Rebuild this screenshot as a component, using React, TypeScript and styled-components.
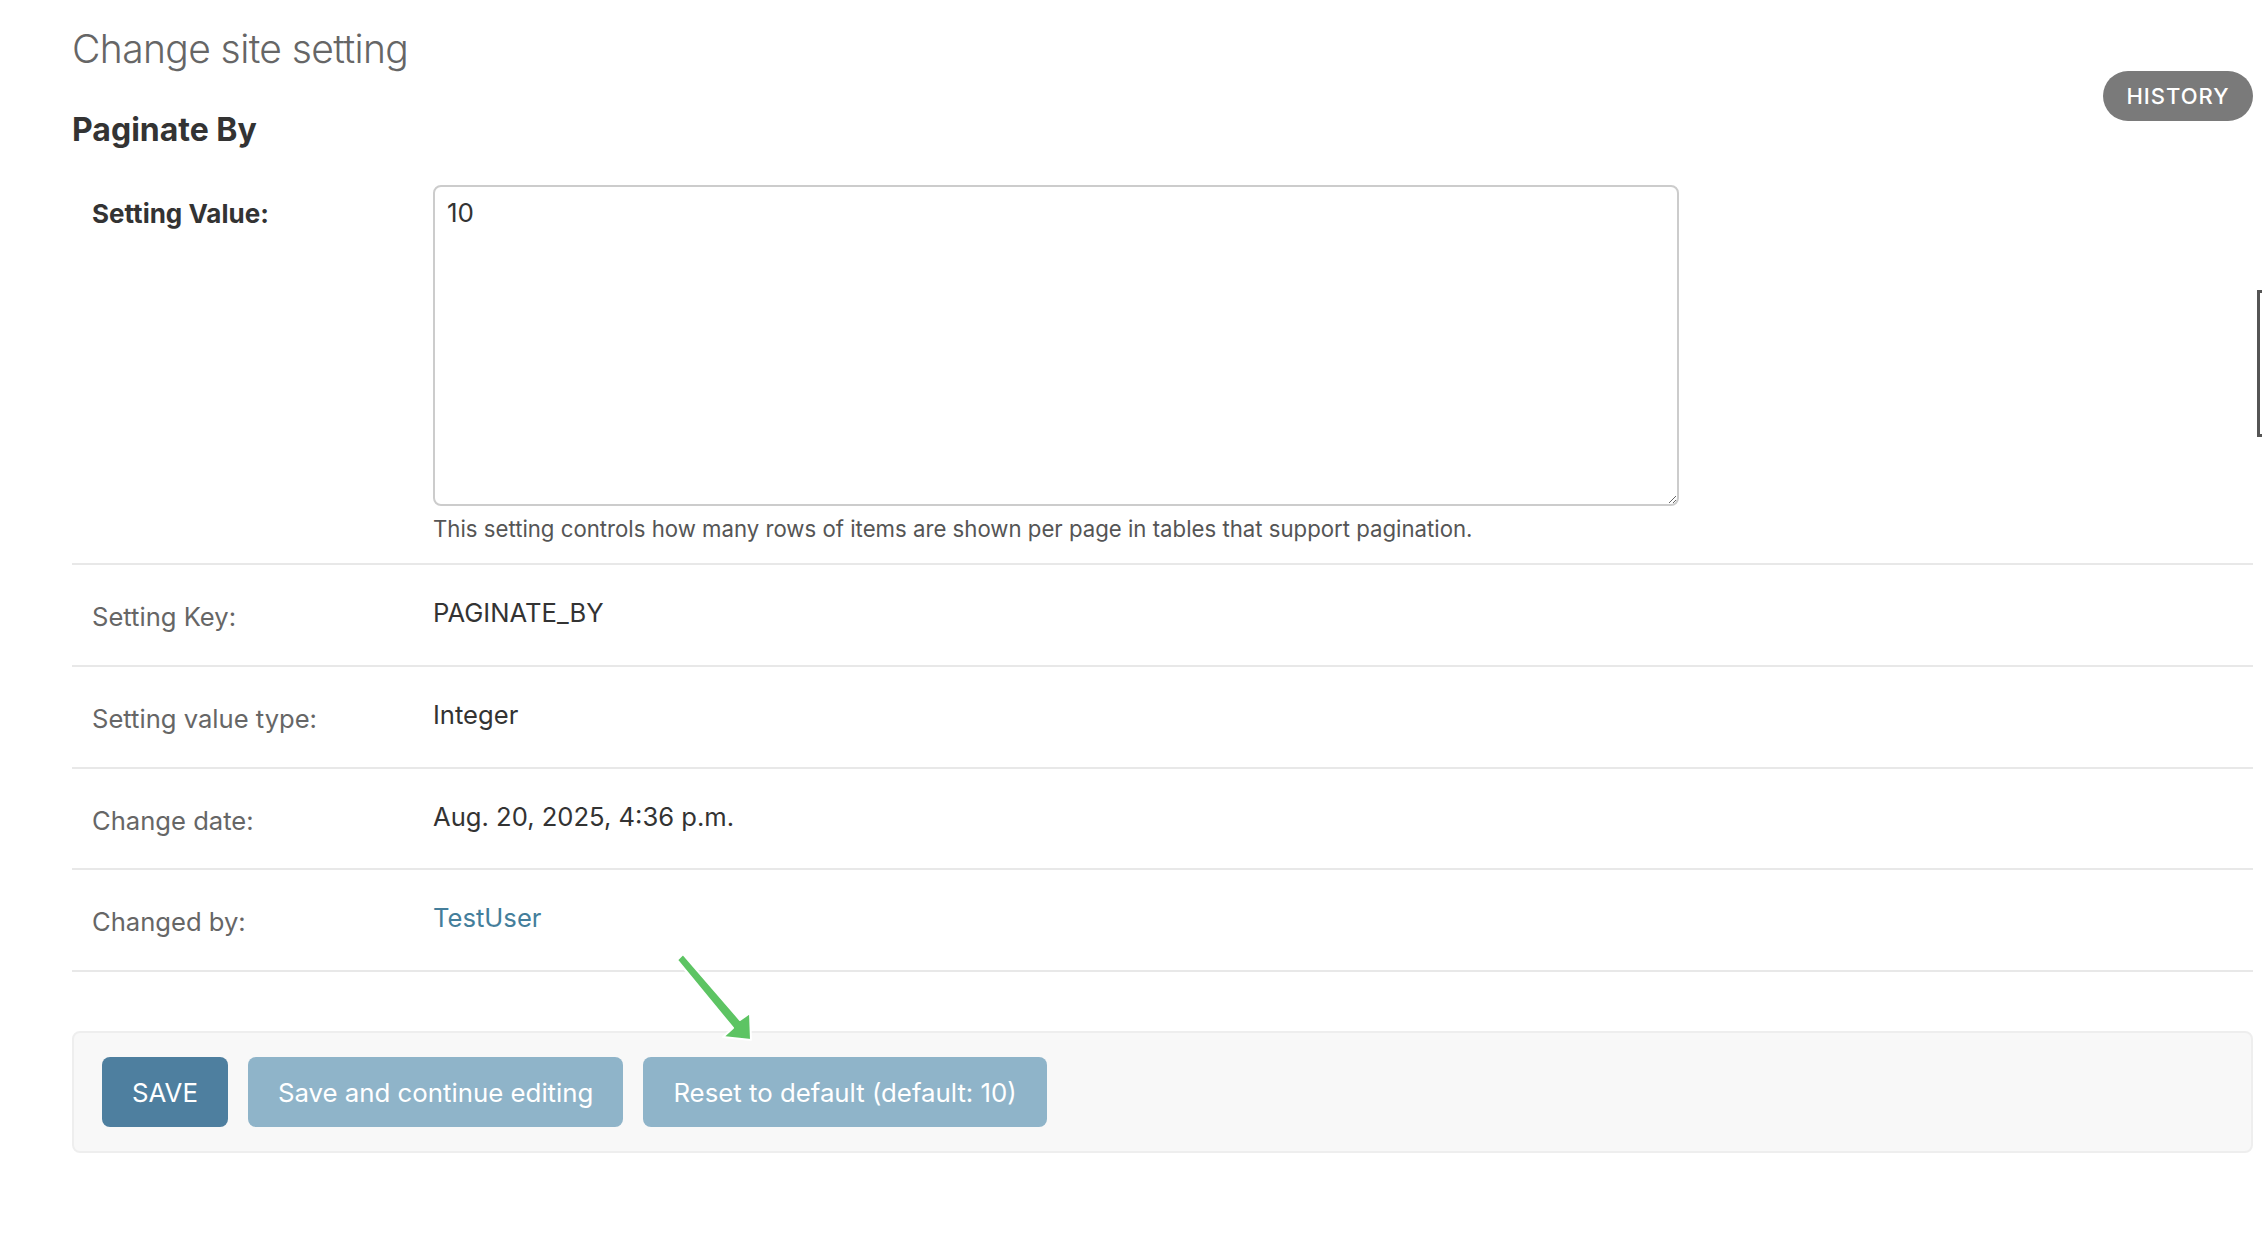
import styled, { createGlobalStyle } from "styled-components";

// sizes are written at the 2x scale of the screenshot
const GlobalStyle = createGlobalStyle`
  html, body {
    margin: 0;
    padding: 0;
    background: #fff;
    overflow: hidden;
  }
  body {
    font-family: "Inter", "Noto Sans", sans-serif;
    color: #333;
  }
`;

const rows = [
  { label: "Setting Key:", value: "PAGINATE_BY" },
  { label: "Setting value type:", value: "Integer" },
  { label: "Change date:", value: "Aug. 20, 2025, 4:36 p.m." },
  { label: "Changed by:", value: "TestUser", link: true },
];

export default function App() {
  return (
    <>
      <GlobalStyle />
      <Page>
        <Header>
          <Title>Change site setting</Title>
          <HistoryLink href="#">History</HistoryLink>
          <SectionTitle>Paginate By</SectionTitle>
        </Header>

        <Fieldset>
          <FieldRow>
            <FieldLabel $required>Setting Value:</FieldLabel>
            <FieldBody>
              <TextArea defaultValue="10" />
              <HelpText>
                This setting controls how many rows of items are shown per page in tables that support pagination.
              </HelpText>
            </FieldBody>
          </FieldRow>

          {rows.map((row) => (
            <ReadonlyRow key={row.label}>
              <FieldLabel>{row.label}</FieldLabel>
              <ReadonlyValue>
                {row.link ? <ValueLink href="#">{row.value}</ValueLink> : row.value}
              </ReadonlyValue>
            </ReadonlyRow>
          ))}
        </Fieldset>

        <SubmitRow>
          <Button $primary>SAVE</Button>
          <Button>Save and continue editing</Button>
          <Button>Reset to default (default: 10)</Button>
        </SubmitRow>

        <Annotation width="92" height="102" viewBox="0 0 92 102">
          <g fill="#5dc463" stroke="#fff" strokeWidth="2" strokeLinejoin="round">
            <path d="M7 15 L13 9 L70 75 L80 68 L81 95 L53 92 L63 83 Z" />
          </g>
        </Annotation>

        <ToolbarHandle />
      </Page>
    </>
  );
}

const Page = styled.div`
  position: relative;
  box-sizing: border-box;
  width: 2262px;
  min-height: 1244px;
  padding: 25px 9px 0 72px;
`;

const Header = styled.div`
  display: grid;
  grid-template-columns: 1fr auto;
`;

const Title = styled.h1`
  grid-column: 1;
  grid-row: 1;
  margin: 0;
  font-size: 39px;
  line-height: 48px;
  font-weight: 300;
  color: #666;
  letter-spacing: -0.6px;
`;

const HistoryLink = styled.a`
  grid-column: 2;
  grid-row: 1 / span 2;
  align-self: start;
  display: flex;
  align-items: center;
  justify-content: center;
  box-sizing: border-box;
  margin-top: 46px;
  width: 150px;
  height: 50px;
  border-radius: 25px;
  background: #7a7a7a;
  color: #fff;
  font-size: 22px;
  font-weight: 500;
  letter-spacing: 1px;
  text-transform: uppercase;
  text-decoration: none;
`;

const SectionTitle = styled.h2`
  grid-column: 1;
  grid-row: 2;
  margin: 37px 0 0;
  font-size: 32px;
  line-height: 40px;
  font-weight: 700;
  color: #333;
`;

const Fieldset = styled.div`
  margin-top: 14px;
  display: flex;
  flex-direction: column;
`;

const FieldRow = styled.div`
  display: flex;
  box-sizing: border-box;
  padding: 21px 0 18px 20px;
  border-bottom: 2px solid #e8e8e8;
`;

const ReadonlyRow = styled(FieldRow)`
  height: 101.8px;
  padding-top: 20px;
  padding-bottom: 0;
`;

const FieldLabel = styled.div<{ $required?: boolean }>`
  flex: 0 0 341px;
  padding-top: ${(p) => (p.$required ? "11px" : "14px")};
  font-size: ${(p) => (p.$required ? "26px" : "25.6px")};
  line-height: 36px;
  font-weight: ${(p) => (p.$required ? 700 : 400)};
  color: ${(p) => (p.$required ? "#333" : "#666")};
`;

const FieldBody = styled.div`
  display: flex;
  flex-direction: column;
`;

const TextArea = styled.textarea`
  box-sizing: border-box;
  width: 1246px;
  height: 321px;
  padding: 8px 12px;
  border: 2px solid #ccc;
  border-radius: 8px;
  font-family: "Inter", sans-serif;
  font-size: 26px;
  line-height: 36px;
  color: #333;
  outline: none;
`;

const HelpText = styled.div`
  margin-top: 7px;
  font-size: 22.2px;
  line-height: 32px;
  color: #555;
`;

const ReadonlyValue = styled.div`
  padding-top: 10px;
  font-size: 25.6px;
  line-height: 36px;
  color: #333;
`;

const ValueLink = styled.a`
  color: #447e9b;
  text-decoration: none;
`;

const SubmitRow = styled.div`
  display: flex;
  gap: 20px;
  margin-top: 59px;
  padding: 24px 28px;
  border: 2px solid #eee;
  border-radius: 8px;
  background: #f8f8f8;
`;

const Button = styled.button<{ $primary?: boolean }>`
  height: 70px;
  padding: 0 30px;
  border: none;
  border-radius: 8px;
  background: ${(p) => (p.$primary ? "#4e7f9f" : "#8fb4c9")};
  color: #fff;
  font-family: "Inter", sans-serif;
  font-size: 25.8px;
  cursor: pointer;
`;

const Annotation = styled.svg`
  position: absolute;
  left: 670px;
  top: 945px;
  overflow: visible;
`;

const ToolbarHandle = styled.div`
  position: fixed;
  top: 290px;
  right: 0;
  width: 2px;
  height: 141px;
  border: 3px solid #555;
  border-right: none;
`;
